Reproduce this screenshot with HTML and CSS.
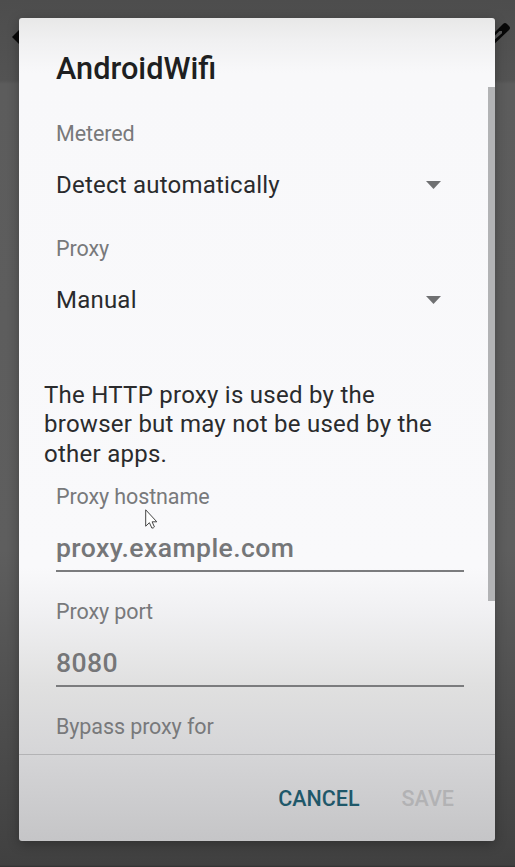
FILE: index.html
```html
<!DOCTYPE html>
<html lang="en">
<head>
<meta charset="utf-8">
<title>AndroidWifi</title>
<link rel="stylesheet" href="styles.css">
</head>
<body>
<div class="screen">
  <svg class="icon back" viewBox="0 0 10 16"><path d="M0 8 8 0v16z"/></svg>
  <svg class="icon edit" viewBox="0 0 20 30"><path d="M0 17 12 5Q14 3.2 16 5L18 7Q20 9 18 11L0 28z"/><path class="slot" d="M2 18.5 8.5 12H11v2.3L2 22z"/></svg>
  <main class="dialog">
    <h1 class="title"><span>AndroidWifi</span></h1>
    <div class="body">
      <div class="field">
        <div class="label"><span>Metered</span></div>
        <div class="value"><span>Detect automatically</span><i class="caret"></i></div>
      </div>
      <div class="field">
        <div class="label"><span>Proxy</span></div>
        <div class="value"><span>Manual</span><i class="caret"></i></div>
      </div>
      <p class="note">The HTTP proxy is used by the<br>browser but may not be used by the<br>other apps.</p>
      <div class="field">
        <div class="label"><span>Proxy hostname</span></div>
        <div class="hint"><span>proxy.example.com</span></div>
      </div>
      <div class="field">
        <div class="label"><span>Proxy port</span></div>
        <div class="hint"><span>8080</span></div>
      </div>
      <div class="field">
        <div class="label"><span>Bypass proxy for</span></div>
      </div>
      <div class="scrollbar"></div>
    </div>
    <div class="actions">
      <span class="cancel">CANCEL</span>
      <span class="save">SAVE</span>
    </div>
  </main>
  <svg class="pointer" viewBox="0 0 13 20"><path d="M.7.8v16.4l3.7-3.5 2.5 5.4q1.8 0 2.5-1.2l-2.3-5.1h4.7z"/></svg>
</div>
</body>
</html>
```
FILE: styles.css
```css
* { box-sizing: border-box; }
body { margin: 0; font-family: Roboto, sans-serif; }
.screen {
  position: relative;
  width: 515px;
  height: 867px;
  padding: 18px 20px 26px 19px;
  overflow: hidden;
  background: linear-gradient(#4d4d4d 0, #535353 80px, #5c5c5c 84px, #5e5e5e 550px, #515151 680px, #424242 845px, #404040 865px, #303030 867px);
}
.icon { position: absolute; fill: #080808; }
.back { left: 12px; top: 29px; width: 10px; height: 16px; }
.edit { left: 491px; top: 19px; width: 20px; height: 30px; }
.slot { fill: #555; }
.dialog {
  position: relative;
  height: 823px;
  display: flex;
  flex-direction: column;
  border-radius: 3px;
  overflow: hidden;
  box-shadow: 0 3px 12px rgba(0, 0, 0, .28);
  background: linear-gradient(#e8e8e8 0, #f0f0f1 22px, #f8f8fa 55px, #f9f9fb 550px, #f0f0f2 595px, #e0e0e0 667px, #d6d6d8 730px, #c5c5c7 823px);
}
.title {
  flex: none;
  height: 69px;
  margin: 0;
  padding: 33px 0 0 37px;
  font-size: 30.7px;
  line-height: 36px;
  font-weight: 500;
  color: #1e1f21;
}
.body {
  position: relative;
  flex: none;
  height: 668px;
  padding: 34px 31px 0 37px;
  overflow: hidden;
  border-bottom: 1px solid #b3b3b5;
}
.field { height: 115px; display: flex; flex-direction: column; gap: 23px; }
.label { height: 26px; font-size: 21.5px; line-height: 26px; letter-spacing: -.1px; color: #78797b; }
.value {
  height: 30px;
  padding-right: 23px;
  display: flex;
  align-items: center;
  justify-content: space-between;
  font-size: 24px;
  line-height: 30px;
  letter-spacing: .22px;
  color: #2a2b2d;
}
.caret {
  width: 15px;
  height: 8px;
  background: #6f7072;
  clip-path: polygon(0 0, 100% 0, 50% 100%);
}
.note {
  height: 103px;
  margin: 30px 0 0 -12px;
  font-size: 24px;
  line-height: 29.3px;
  letter-spacing: .26px;
  color: #2a2b2d;
  white-space: nowrap;
}
.hint {
  height: 39px;
  font-size: 26.6px;
  line-height: 30px;
  letter-spacing: .4px;
  font-weight: 500;
  color: #757678;
  border-bottom: 2px solid #7b7c7e;
}
.scrollbar { position: absolute; right: 0; top: 0; width: 7px; height: 514px; background: #b2b3b5; }
.actions {
  flex: 1;
  padding: 0 41px 0 0;
  display: flex;
  justify-content: flex-end;
  gap: 42px;
  font-size: 21.5px;
  line-height: 87px;
  font-weight: 500;
}
.cancel { color: #1f586a; }
.save { color: #b2b2b4; }
.pointer { position: absolute; left: 145px; top: 509px; width: 13px; height: 20px; fill: #fff; stroke: #444; stroke-width: 1; }
```
